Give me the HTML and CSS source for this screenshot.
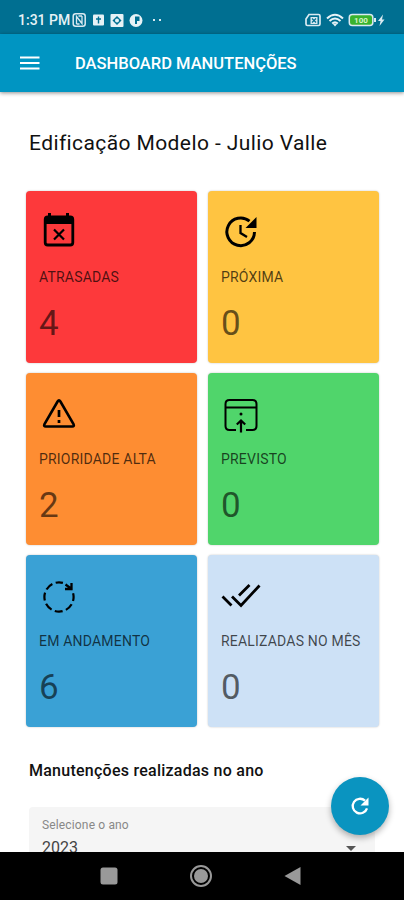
FILE: index.html
```
<!DOCTYPE html>
<html lang="pt-br">
<head>
    <meta charset="UTF-8">
    <meta name="viewport" content="width=device-width, initial-scale=1.0">
    <title>Dashboard Manutenções</title>
    <link rel="stylesheet" href="styles.css">
</head>
<body>
    <div class="app">
        <div class="status-bar">
            <span class="clock">1:31 PM</span>
            <svg class="status-left" width="92" height="16" viewBox="0 0 92 16">
                <rect x="1.2" y="1.7" width="12" height="12.6" rx="2.5" fill="none" stroke="#d9eaf1" stroke-width="1.5"/>
                <path d="M4.500 12V4.500l5.500 7V4M6.500 4h3.500M4.500 12h3" fill="none" stroke="#d9eaf1" stroke-width="1.300"/>
                <rect x="21" y="2.500" width="11" height="11" rx="1" fill="#e6f2f6"/>
                <path d="M26.500 4.500v7M24 7h5" stroke="#006f91" stroke-width="1.400"/>
                <rect x="38.500" y="2" width="13" height="13" rx="1" fill="#e6f2f6"/>
                <path d="M45 4l4.500 4.500L45 13l-4.500-4.500z" fill="#006f91"/>
                <circle cx="45" cy="8.500" r="2" fill="#e6f2f6"/>
                <circle cx="64" cy="8.500" r="6.500" fill="#e6f2f6"/>
                <path d="M63 4.500h4.500v4.500H63z" fill="#006f91"/>
                <path d="M63 8h2v4h-2z" fill="#006f91"/>
                <rect x="81" y="7" width="2" height="2" fill="#d9eaf1"/>
                <rect x="87" y="7" width="2" height="2" fill="#d9eaf1"/>
            </svg>
            <svg class="status-right" width="82" height="16" viewBox="0 0 82 16">
                <path d="M6 2.500h9.500q1.500 0 1.500 1.500v8q0 1.500-1.500 1.500H4.500Q3 13.500 3 12V7z" fill="none" stroke="#d9eaf1" stroke-width="1.700"/>
                <rect x="7.500" y="5" width="7" height="7" fill="#d9eaf1"/>
                <path d="M9 6.500l4 4m0-4l-4 4" stroke="#006f91" stroke-width="1.200"/>
                <path d="M24 6.500q8-7.500 16 0M26.500 9q5.500-5 11 0M29.200 11.500q2.800-2.500 5.600 0" fill="none" stroke="#e6f2f6" stroke-width="2"/>
                <path d="M29.500 11.500h5l-2.500 3z" fill="#e6f2f6"/>
                <rect x="46.300" y="2.500" width="23.500" height="11" rx="3" fill="#38b32e" stroke="#d9eaf1" stroke-width="1.500"/>
                <rect x="71" y="6" width="2" height="4" fill="#d9eaf1"/>
                <text class="charge" x="58" y="11.300" text-anchor="middle">100</text>
                <path d="M80 2.500L75 9h2.500L76.500 14 81.500 7.500h-2.500z" fill="#d9eaf1"/>
            </svg>
        </div>
        <header class="toolbar">
            <svg width="20" height="14" viewBox="0 0 20 14">
                <path d="M0 1.500h19.500M0 7h19.500M0 12.500h19.500" stroke="#fff" stroke-width="2"/>
            </svg>
            <span class="toolbar-title">DASHBOARD MANUTENÇÕES</span>
        </header>

        <main class="content">
            <h1>Edificação Modelo - Julio Valle</h1>

            <div class="cards">
                <div class="card atrasadas">
                    <svg class="icon" width="44" height="40" viewBox="0 0 44 40">
                        <rect x="6.200" y="6" width="27.600" height="28" rx="2.500" fill="none" stroke="#000" stroke-width="2.800"/>
                        <path d="M6 6h28v7H6zM9 2h3v4H9zM27 2h3v4h-3z"/>
                        <path d="M15 18.500l10 10m0-10l-10 10" stroke="#000" stroke-width="2.200"/>
                    </svg>
                    <div class="label">ATRASADAS</div>
                    <div class="value">4</div>
                </div>
                <div class="card proxima">
                    <svg class="icon" width="44" height="40" viewBox="0 0 44 40">
                        <path d="M33.500 21A13.800 13.800 0 1 1 28.500 10.200" fill="none" stroke="#000" stroke-width="3"/>
                        <path d="M35.500 6v11H24.500z"/>
                        <path d="M19.500 14v8l6.500 4" fill="none" stroke="#000" stroke-width="2.300"/>
                    </svg>
                    <div class="label">PRÓXIMA</div>
                    <div class="value">0</div>
                </div>
                <div class="card prioridade">
                    <svg class="icon" width="44" height="40" viewBox="0 0 44 40">
                        <path d="M18.600 8.500L5.500 31.200q-1.200 2.300 1.300 2.300h26.400q2.500 0 1.300-2.300L21.400 8.500q-1.400-2.200-2.800 0z" fill="none" stroke="#000" stroke-width="2.600"/>
                        <path d="M20 17v7M20 27v3" stroke="#000" stroke-width="2.700"/>
                    </svg>
                    <div class="label">PRIORIDADE ALTA</div>
                    <div class="value">2</div>
                </div>
                <div class="card previsto">
                    <svg class="icon" width="44" height="40" viewBox="0 0 44 40">
                        <path d="M15 37H8.500q-4 0-4-4V11q0-4 4-4h23q4 0 4 4v22q0 4-4 4H25M4.500 14.500h31" fill="none" stroke="#000" stroke-width="2"/>
                        <path d="M20 39.500V29M15.800 31.500l4.200-4 4.200 4" fill="none" stroke="#000" stroke-width="2.200"/>
                        <circle cx="20" cy="21" r="1.500"/>
                    </svg>
                    <div class="label">PREVISTO</div>
                    <div class="value">0</div>
                </div>
                <div class="card andamento">
                    <svg class="icon" width="44" height="40" viewBox="0 0 44 40">
                        <circle cx="20" cy="22" r="14.600" fill="none" stroke="#000" stroke-width="2.200" stroke-dasharray="8 3.467" stroke-dashoffset="4" transform="rotate(-90 20 22)"/>
                        <path class="gap" d="M27 8l8-2v9l-4 1z"/>
                        <path d="M32.500 8v6H26M26.500 9.500l5.500 4" fill="none" stroke="#000" stroke-width="2.300"/>
                    </svg>
                    <div class="label">EM ANDAMENTO</div>
                    <div class="value">6</div>
                </div>
                <div class="card realizadas">
                    <svg class="icon" width="44" height="40" viewBox="0 0 44 40">
                        <path d="M1.500 21.500l9 9M11 21.500l9 9L38.500 10.500M18 20.500L28.500 10" fill="none" stroke="#000" stroke-width="2.800"/>
                    </svg>
                    <div class="label">REALIZADAS NO MÊS</div>
                    <div class="value">0</div>
                </div>
            </div>

            <h2>Manutenções realizadas no ano</h2>

            <div class="select">
                <div class="select-label">Selecione o ano</div>
                <div class="select-row">
                    <span>2023</span>
                    <svg width="10" height="5" viewBox="0 0 10 5"><path d="M0 0h10L5 5z" fill="#555"/></svg>
                </div>
            </div>
        </main>

        <div class="fab">
            <svg width="20" height="20" viewBox="0 0 20 20">
                <path d="M17 12.300A7.300 7.300 0 1 1 15 4.700" fill="none" stroke="#fff" stroke-width="2.300"/>
                <path d="M18.500 1.500v8h-8z" fill="#fff"/>
            </svg>
        </div>

        <nav class="nav-bar">
            <svg width="18" height="18" viewBox="0 0 18 18"><rect x="0.500" y="0.500" width="17" height="17" rx="2.500" fill="#999"/></svg>
            <svg width="24" height="24" viewBox="0 0 24 24">
                <circle cx="12" cy="12" r="10" fill="none" stroke="#999" stroke-width="2"/>
                <circle cx="12" cy="12" r="7" fill="#999"/>
            </svg>
            <svg width="17" height="20" viewBox="0 0 17 20"><path d="M16.500 1v18L0.500 10z" fill="#999"/></svg>
        </nav>
    </div>
</body>
</html>
```
FILE: styles.css
```
body {
    margin: 0;
    font-family: Roboto, sans-serif;
    color: #111;
    background-color: #fff;
}
.app {
    position: relative;
    display: flex;
    flex-direction: column;
    width: 404px;
    height: 900px;
    overflow: hidden;
}
.status-bar {
    display: flex;
    align-items: center;
    flex: none;
    box-sizing: border-box;
    height: 34px;
    padding: 6px 19px 0 18px;
    background-color: #006f91;
}
.clock {
    width: 52px;
    font-size: 14px;
    font-weight: 500;
    white-space: nowrap;
    color: #e6f2f6;
}
.status-left {
    margin-left: 2px;
}
.status-right {
    margin-left: auto;
}
.charge {
    font-size: 8px;
    font-weight: 700;
    fill: #d8f5c8;
}
.toolbar {
    display: flex;
    align-items: center;
    flex: none;
    gap: 35px;
    height: 58px;
    padding-left: 20px;
    background-color: #0095c2;
    box-shadow: 0 1px 4px rgba(0, 0, 0, 0.45);
    z-index: 1;
}
.toolbar-title {
    font-size: 16.5px;
    font-weight: 500;
    color: #fff;
}
.content {
    flex: 1;
    min-height: 0;
    overflow: hidden;
    padding: 0 25px 0 26px;
}
h1 {
    margin: 39px 0 35px 3px;
    font-size: 21px;
    font-weight: 400;
    line-height: 25px;
    letter-spacing: 0.4px;
    white-space: nowrap;
}
.cards {
    display: grid;
    grid-template-columns: 171px 171px;
    grid-auto-rows: 172px;
    gap: 10px 11px;
}
.card {
    box-sizing: border-box;
    padding: 20px 0 0 13px;
    border-radius: 4px;
    box-shadow: 0 0 2px rgba(0, 0, 0, 0.25);
}
.icon {
    display: block;
}
.label {
    margin-top: 17px;
    font-size: 14px;
    line-height: 18px;
    letter-spacing: 0.2px;
    white-space: nowrap;
    color: rgba(0, 0, 0, 0.7);
}
.value {
    margin-top: 17px;
    font-size: 35px;
    line-height: 42px;
    color: rgba(0, 0, 0, 0.6);
}
.atrasadas {
    background-color: #fd393b;
}
.proxima {
    background-color: #ffc441;
}
.prioridade {
    background-color: #fe8d32;
}
.previsto {
    background-color: #50d56b;
}
.andamento {
    background-color: #3aa1d5;
}
.realizadas {
    background-color: #cde1f6;
}
.gap {
    fill: #3aa1d5;
}
h2 {
    margin: 33px 0 26px 3px;
    font-size: 16px;
    font-weight: 500;
    line-height: 21px;
    letter-spacing: 0.25px;
    white-space: nowrap;
}
.select {
    width: 346px;
    height: 70px;
    margin-left: 3px;
    padding-top: 10px;
    box-sizing: border-box;
    border-radius: 4px 4px 0 0;
    background-color: #f5f5f5;
}
.select-label {
    padding-left: 13px;
    font-size: 12px;
    line-height: 16px;
    letter-spacing: 0.15px;
    color: #888;
}
.select-row {
    display: flex;
    align-items: center;
    justify-content: space-between;
    margin-top: 4px;
    padding: 0 19px 0 13px;
    font-size: 16px;
    line-height: 22px;
    color: #444;
}
.fab {
    position: absolute;
    right: 15px;
    bottom: 65px;
    display: flex;
    align-items: center;
    justify-content: center;
    width: 58px;
    height: 58px;
    border-radius: 50%;
    background-color: #0a94c0;
    box-shadow: 0 3px 6px rgba(0, 0, 0, 0.3);
    z-index: 2;
}
.nav-bar {
    display: flex;
    align-items: center;
    justify-content: center;
    flex: none;
    gap: 71px;
    box-sizing: border-box;
    height: 48px;
    padding-right: 3px;
    background-color: #000;
}
```
